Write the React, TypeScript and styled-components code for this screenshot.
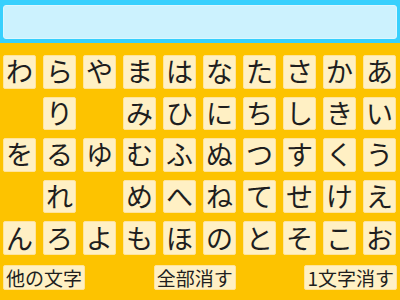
import React from "react"
import styled, { createGlobalStyle } from "styled-components"

const GlobalStyle = createGlobalStyle`
  html, body {
    margin: 0;
    padding: 0;
  }
  body {
    width: 400px;
    height: 300px;
    overflow: hidden;
    font-family: "Noto Sans CJK JP", "Noto Sans", sans-serif;
    color: #1e1e1e;
  }
`

const Screen = styled.div`
  display: flex;
  flex-direction: column;
  width: 400px;
  height: 300px;
  background-color: #fdc300;
`

const Header = styled.div`
  background-color: #38d0fd;
  padding: 5px 3px 4px 3px;
`

const InputBox = styled.div`
  height: 32px;
  background-color: #ccf2fe;
  border: 1px solid #dcf7ff;
  border-radius: 3px;
`

const Keyboard = styled.div`
  display: flex;
  flex-direction: column;
  padding: 12px 3px 0 3px;
`

const KeyGrid = styled.div`
  display: grid;
  grid-template-columns: repeat(10, 33px);
  grid-template-rows: repeat(5, 1fr);
  column-gap: 7px;
  row-gap: 8px;
  height: 200px;
`

const Key = styled.div`
  display: flex;
  align-items: center;
  justify-content: center;
  box-sizing: border-box;
  background-color: #fff0c4;
  border: 1px solid #ffe49c;
  border-radius: 2px;
  font-size: 27px;
  line-height: 1;
  padding-bottom: 2px;
`

const Blank = styled.div``

const BottomBar = styled.div`
  display: flex;
  justify-content: space-between;
  margin-top: 10px;
`

const ActionButton = styled.div`
  display: flex;
  align-items: center;
  height: 25px;
  box-sizing: border-box;
  padding: 0 2px 1px 2px;
  background-color: #fff0c4;
  border: 1px solid #ffe49c;
  border-radius: 2px;
  font-size: 19px;
  line-height: 1;
`

const rows = [
  "わらやまはなたさかあ",
  " り みひにちしきい",
  "をるゆむふぬつすくう",
  " れ めへねてせけえ",
  "んろよもほのとそこお",
]

export default function App() {
  return (
    <>
      <GlobalStyle />
      <Screen>
        <Header>
          <InputBox />
        </Header>
        <Keyboard>
          <KeyGrid>
            {rows.map((row, r) =>
              Array.from(row).map((ch, c) =>
                ch === " " ? (
                  <Blank key={`${r}-${c}`} />
                ) : (
                  <Key key={`${r}-${c}`}>{ch}</Key>
                )
              )
            )}
          </KeyGrid>
          <BottomBar>
            <ActionButton>他の文字</ActionButton>
            <ActionButton>全部消す</ActionButton>
            <ActionButton>1文字消す</ActionButton>
          </BottomBar>
        </Keyboard>
      </Screen>
    </>
  )
}
